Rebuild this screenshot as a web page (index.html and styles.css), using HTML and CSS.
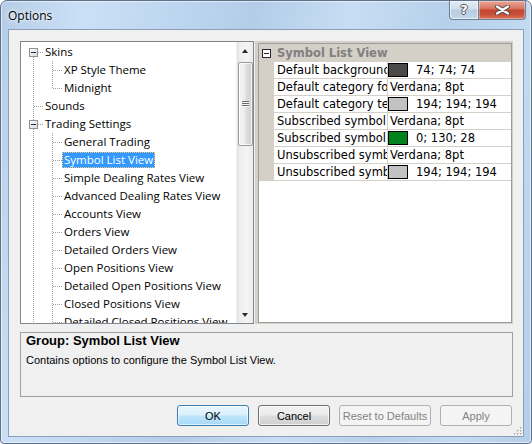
FILE: index.html
```html
<!DOCTYPE html>
<html>
<head>
<meta charset="utf-8">
<title>Options</title>
<link rel="stylesheet" href="styles.css">
</head>
<body>
<svg class="defs" width="0" height="0">
  <defs>
    <symbol id="vfull" viewBox="0 0 19 18"><path d="M9.5 0V18" stroke="#a0a0a0" stroke-dasharray="1 1"/></symbol>
    <symbol id="vtop" viewBox="0 0 19 18"><path d="M9.5 0V10" stroke="#a0a0a0" stroke-dasharray="1 1"/></symbol>
    <symbol id="vbot" viewBox="0 0 19 18"><path d="M9.5 10V18" stroke="#a0a0a0" stroke-dasharray="1 1"/></symbol>
    <symbol id="hz" viewBox="0 0 19 18"><path d="M10 9.5H19" stroke="#a0a0a0" stroke-dasharray="1 1"/></symbol>
    <linearGradient id="boxg" x1="0" y1="0" x2="1" y2="1">
      <stop offset="0" stop-color="#ffffff"/>
      <stop offset="1" stop-color="#d8d8d8"/>
    </linearGradient>
    <symbol id="box" viewBox="0 0 19 18"><rect x="5.5" y="5.5" width="8" height="8" fill="url(#boxg)" stroke="#919191"/><path d="M7 9.5H12" stroke="#1e2a48"/></symbol>
  </defs>
</svg>
<div class="window">
  <div class="titlebar">
    <span class="title">Options</span>
    <div class="caps">
      <div class="cap help">?</div>
      <div class="cap close">
        <svg width="15" height="10" viewBox="0 0 15 10"><path d="M2 1.5L13 8.5M13 1.5L2 8.5" stroke="#4a4a4a" stroke-width="4" stroke-linecap="round"/><path d="M2 1.5L13 8.5M13 1.5L2 8.5" stroke="#ffffff" stroke-width="2.2" stroke-linecap="round"/></svg>
      </div>
    </div>
  </div>
  <div class="client">
    <div class="main">
      <div class="tree">
        <div class="tree-items">
          <div class="node"><svg class="ind"><use href="#vbot"/><use href="#hz"/><use href="#box"/></svg><span class="lbl">Skins</span></div>
          <div class="node"><svg class="ind"><use href="#vfull"/></svg><svg class="ind"><use href="#vfull"/><use href="#hz"/></svg><span class="lbl">XP Style Theme</span></div>
          <div class="node"><svg class="ind"><use href="#vfull"/></svg><svg class="ind"><use href="#vtop"/><use href="#hz"/></svg><span class="lbl">Midnight</span></div>
          <div class="node"><svg class="ind"><use href="#vfull"/><use href="#hz"/></svg><span class="lbl">Sounds</span></div>
          <div class="node"><svg class="ind"><use href="#vfull"/><use href="#hz"/><use href="#box"/></svg><span class="lbl">Trading Settings</span></div>
          <div class="node"><svg class="ind"><use href="#vfull"/></svg><svg class="ind"><use href="#vfull"/><use href="#hz"/></svg><span class="lbl">General Trading</span></div>
          <div class="node"><svg class="ind"><use href="#vfull"/></svg><svg class="ind"><use href="#vfull"/><use href="#hz"/></svg><span class="lbl sel">Symbol List View</span></div>
          <div class="node"><svg class="ind"><use href="#vfull"/></svg><svg class="ind"><use href="#vfull"/><use href="#hz"/></svg><span class="lbl">Simple Dealing Rates View</span></div>
          <div class="node"><svg class="ind"><use href="#vfull"/></svg><svg class="ind"><use href="#vfull"/><use href="#hz"/></svg><span class="lbl">Advanced Dealing Rates View</span></div>
          <div class="node"><svg class="ind"><use href="#vfull"/></svg><svg class="ind"><use href="#vfull"/><use href="#hz"/></svg><span class="lbl">Accounts View</span></div>
          <div class="node"><svg class="ind"><use href="#vfull"/></svg><svg class="ind"><use href="#vfull"/><use href="#hz"/></svg><span class="lbl">Orders View</span></div>
          <div class="node"><svg class="ind"><use href="#vfull"/></svg><svg class="ind"><use href="#vfull"/><use href="#hz"/></svg><span class="lbl">Detailed Orders View</span></div>
          <div class="node"><svg class="ind"><use href="#vfull"/></svg><svg class="ind"><use href="#vfull"/><use href="#hz"/></svg><span class="lbl">Open Positions View</span></div>
          <div class="node"><svg class="ind"><use href="#vfull"/></svg><svg class="ind"><use href="#vfull"/><use href="#hz"/></svg><span class="lbl">Detailed Open Positions View</span></div>
          <div class="node"><svg class="ind"><use href="#vfull"/></svg><svg class="ind"><use href="#vfull"/><use href="#hz"/></svg><span class="lbl">Closed Positions View</span></div>
          <div class="node"><svg class="ind"><use href="#vfull"/></svg><svg class="ind"><use href="#vfull"/><use href="#hz"/></svg><span class="lbl">Detailed Closed Positions View</span></div>
        </div>
        <div class="vscroll">
          <div class="sbtn"><span class="arr up"></span></div>
          <div class="track">
            <div class="thumb"><span class="grip"></span></div>
          </div>
          <div class="sbtn"><span class="arr down"></span></div>
        </div>
      </div>
      <div class="pg">
        <div class="pg-view">
          <div class="cat"><span class="cbox"></span><span class="ctext">Symbol List View</span></div>
          <div class="row"><span class="gut"></span><span class="name">Default background color</span><span class="val"><span class="sw sw-dark"></span><span class="vt">74; 74; 74</span></span></div>
          <div class="row"><span class="gut"></span><span class="name">Default category font</span><span class="val"><span class="vt txt">Verdana; 8pt</span></span></div>
          <div class="row"><span class="gut"></span><span class="name">Default category text color</span><span class="val"><span class="sw sw-light"></span><span class="vt">194; 194; 194</span></span></div>
          <div class="row"><span class="gut"></span><span class="name">Subscribed symbol font</span><span class="val"><span class="vt txt">Verdana; 8pt</span></span></div>
          <div class="row"><span class="gut"></span><span class="name">Subscribed symbol color</span><span class="val"><span class="sw sw-green"></span><span class="vt">0; 130; 28</span></span></div>
          <div class="row"><span class="gut"></span><span class="name">Unsubscribed symbol font</span><span class="val"><span class="vt txt">Verdana; 8pt</span></span></div>
          <div class="row"><span class="gut"></span><span class="name">Unsubscribed symbol color</span><span class="val"><span class="sw sw-light"></span><span class="vt">194; 194; 194</span></span></div>
        </div>
      </div>
    </div>
    <div class="desc">
      <div class="desc-title">Group: Symbol List View</div>
      <div class="desc-text">Contains options to configure the Symbol List View.</div>
    </div>
    <div class="buttons">
      <button class="btn default">OK</button>
      <button class="btn">Cancel</button>
      <button class="btn wide" disabled>Reset to Defaults</button>
      <button class="btn" disabled>Apply</button>
    </div>
    <svg class="sizegrip" width="9" height="9" viewBox="0 0 9 9">
      <g fill="#b9b9b9"><rect x="7" y="1" width="2" height="2"/><rect x="4" y="4" width="2" height="2"/><rect x="7" y="4" width="2" height="2"/><rect x="1" y="7" width="2" height="2"/><rect x="4" y="7" width="2" height="2"/><rect x="7" y="7" width="2" height="2"/></g>
      <g fill="#ffffff"><rect x="8" y="2" width="1" height="1"/><rect x="5" y="5" width="1" height="1"/><rect x="8" y="5" width="1" height="1"/><rect x="2" y="8" width="1" height="1"/><rect x="5" y="8" width="1" height="1"/><rect x="8" y="8" width="1" height="1"/></g>
    </svg>
  </div>
</div>
</body>
</html>
```

FILE: styles.css
```css
* { box-sizing: border-box; }
html, body { margin: 0; padding: 0; }
body {
  width: 532px;
  height: 444px;
  background: #ffffff;
  overflow: hidden;
}
.defs { position: absolute; width: 0; height: 0; }

.window {
  width: 532px;
  height: 444px;
  border: 1px solid #5d7189;
  border-radius: 7px 7px 4px 4px;
  background: linear-gradient(100deg, #b4cde8 0%, #cbe0f5 14%, #bed6f0 28%, #b3cde9 42%, #c7ddf3 58%, #b6d0eb 74%, #c2daf2 88%, #b4cee9 100%);
  box-shadow: inset 0 0 0 1px rgba(255,255,255,0.55);
  display: flex;
  flex-direction: column;
  overflow: hidden;
}

.titlebar {
  height: 28px;
  display: flex;
  align-items: flex-start;
  padding: 0 5px 0 7px;
}
.title {
  flex: 1;
  font-family: "Open Sans", "Liberation Sans", sans-serif;
  font-size: 12px;
  line-height: 16px;
  margin-top: 7px;
  color: #000;
  text-shadow: 0 0 6px rgba(255,255,255,0.95), 0 0 3px rgba(255,255,255,0.9);
}
.caps { display: flex; }
.cap {
  height: 19px;
  border: 1px solid #6c7f96;
  border-top: none;
  display: flex;
  align-items: center;
  justify-content: center;
}
.help {
  width: 29px;
  border-right: none;
  border-radius: 0 0 0 4px;
  background: linear-gradient(#e2ebf5 0%, #d0deed 45%, #b8cbe0 50%, #c6d6e9 100%);
  box-shadow: inset 0 0 0 1px rgba(255,255,255,0.6);
  font-family: "DejaVu Sans", sans-serif;
  font-weight: bold;
  font-size: 13px;
  color: #fff;
  text-shadow: -1px 0 #555, 1px 0 #555, 0 -1px #555, 0 1px #555;
  padding-bottom: 1px;
}
.close {
  width: 48px;
  border-radius: 0 0 4px 0;
  background: linear-gradient(#e9a898 0%, #d97a66 40%, #c5452f 52%, #c9503a 75%, #d8735c 100%);
  box-shadow: inset 0 0 0 1px rgba(255,255,255,0.35);
}

.client {
  position: relative;
  flex: 1;
  margin: 0 7px 6px 7px;
  border: 1px solid #8aa0b9;
  background: #f0f0f0;
  padding: 11px 10px 10px 11px;
  display: flex;
  flex-direction: column;
}

.main {
  height: 283px;
  display: flex;
  gap: 1px;
}

/* tree */
.tree {
  width: 234px;
  border: 1px solid #828790;
  background: #fff;
  display: flex;
}
.tree-items {
  flex: 1;
  overflow: hidden;
  padding: 1px 0 0 3px;
}
.node {
  height: 18px;
  display: flex;
  align-items: center;
  white-space: nowrap;
}
.ind {
  width: 19px;
  height: 18px;
  flex: none;
}
.ind use { width: 19px; height: 18px; }
.lbl {
  font-family: "Open Sans", "Liberation Sans", sans-serif;
  font-size: 11.5px;
  line-height: 16px;
  height: 16px;
  padding: 0 1px;
  color: #000;
  border: 1px solid transparent;
  display: flex;
  align-items: center;
}
.lbl.sel {
  background: #3399ff;
  color: #fff;
  border: 1px dotted #f3c98a;
}

.vscroll {
  width: 17px;
  flex: none;
  display: flex;
  flex-direction: column;
  background: linear-gradient(to right, #e3e3e3 0%, #efefef 20%, #f4f4f4 60%, #ececec 100%);
  border-left: 1px solid #f0f0f0;
}
.sbtn {
  height: 17px;
  display: flex;
  align-items: center;
  justify-content: center;
}
.arr {
  width: 0;
  height: 0;
  border-left: 3.5px solid transparent;
  border-right: 3.5px solid transparent;
}
.arr.up { border-bottom: 4px solid #2b2b2b; }
.arr.down { border-top: 4px solid #2b2b2b; }
.track {
  flex: 1;
  padding-top: 3px;
}
.thumb {
  height: 84px;
  margin: 0 0 0 1px;
  width: 15px;
  border: 1px solid #9a9a9a;
  border-radius: 2px;
  background: linear-gradient(to right, #f4f4f4 0%, #ececec 45%, #dcdcdc 55%, #d2d2d2 100%);
  box-shadow: inset 0 0 0 1px rgba(255,255,255,0.75);
  display: flex;
  align-items: center;
  justify-content: center;
}
.grip {
  width: 7px;
  height: 6px;
  background: repeating-linear-gradient(#6e6e6e 0 1px, #f5f5f5 1px 2px);
}

/* property grid */
.pg {
  flex: 1;
  background: #d4d0c8;
  padding: 2px 1px 1px 3px;
  display: flex;
}
.pg-view {
  flex: 1;
  border: 1px solid #9c9c9c;
  background: #fff;
  font-family: "DejaVu Sans", Verdana, sans-serif;
  font-size: 11.5px;
  color: #000;
}
.cat {
  height: 18px;
  border-bottom: 1px solid #d4d0c8;
  background: #d4d0c8;
  display: flex;
  align-items: center;
}
.cbox {
  width: 9px;
  height: 9px;
  margin-left: 3px;
  margin-top: 1px;
  border: 1px solid #2a2a2a;
  background: linear-gradient(#2a2a2a, #2a2a2a) center / 5px 1px no-repeat, #fff;
}
.ctext {
  margin-left: 6px;
  font-weight: bold;
  color: #808080;
  line-height: 16px;
}
.row {
  height: 17px;
  border-bottom: 1px solid #d4d0c8;
  display: flex;
}
.gut {
  width: 15px;
  flex: none;
  background: #d4d0c8;
}
.name {
  width: 114px;
  flex: none;
  padding-left: 3px;
  border-right: 1px solid #d4d0c8;
  white-space: nowrap;
  overflow: hidden;
  line-height: 16px;
}
.val {
  flex: 1;
  display: flex;
  align-items: center;
  white-space: nowrap;
  overflow: hidden;
}
.vt { line-height: 16px; margin-left: 8px; }
.vt.txt { margin-left: 2px; }
.sw {
  width: 20px;
  height: 14px;
  border: 1px solid #000;
  flex: none;
}
.sw-dark { background: #4a4a4a; }
.sw-light { background: #c2c2c2; }
.sw-green { background: #00821c; }

/* description */
.desc {
  height: 65px;
  margin-top: 8px;
  border: 1px solid #a0a0a0;
  padding: 0 5px;
  font-family: "Liberation Sans", Arial, sans-serif;
  color: #000;
}
.desc-title {
  font-weight: bold;
  font-size: 13px;
  line-height: 15px;
}
.desc-text {
  font-size: 11px;
  line-height: 14px;
  margin-top: 5px;
}

/* buttons */
.buttons {
  margin-top: 8px;
  height: 21px;
  display: flex;
  justify-content: flex-end;
  gap: 9px;
  padding-right: 1px;
}
.btn {
  width: 72px;
  height: 21px;
  padding: 0;
  border: 1px solid #707070;
  border-radius: 3px;
  background: linear-gradient(#f2f2f2 0%, #ebebeb 48%, #dddddd 52%, #cfcfcf 100%);
  box-shadow: inset 0 0 0 1px rgba(255,255,255,0.7);
  font-family: "Liberation Sans", Arial, sans-serif;
  font-size: 11px;
  color: #000;
}
.btn.wide { width: 92px; }
.btn.default {
  border-color: #3c7fb1;
  background: linear-gradient(#eaf6fd 0%, #d9f0fc 48%, #bee6fd 52%, #a7d9f5 100%);
  box-shadow: inset 0 0 0 1px rgba(255,255,255,0.6);
}
.btn:disabled {
  border-color: #adb2b5;
  background: #f4f4f4;
  box-shadow: none;
  color: #838383;
}

.sizegrip {
  position: absolute;
  right: 1px;
  bottom: 1px;
}
```
